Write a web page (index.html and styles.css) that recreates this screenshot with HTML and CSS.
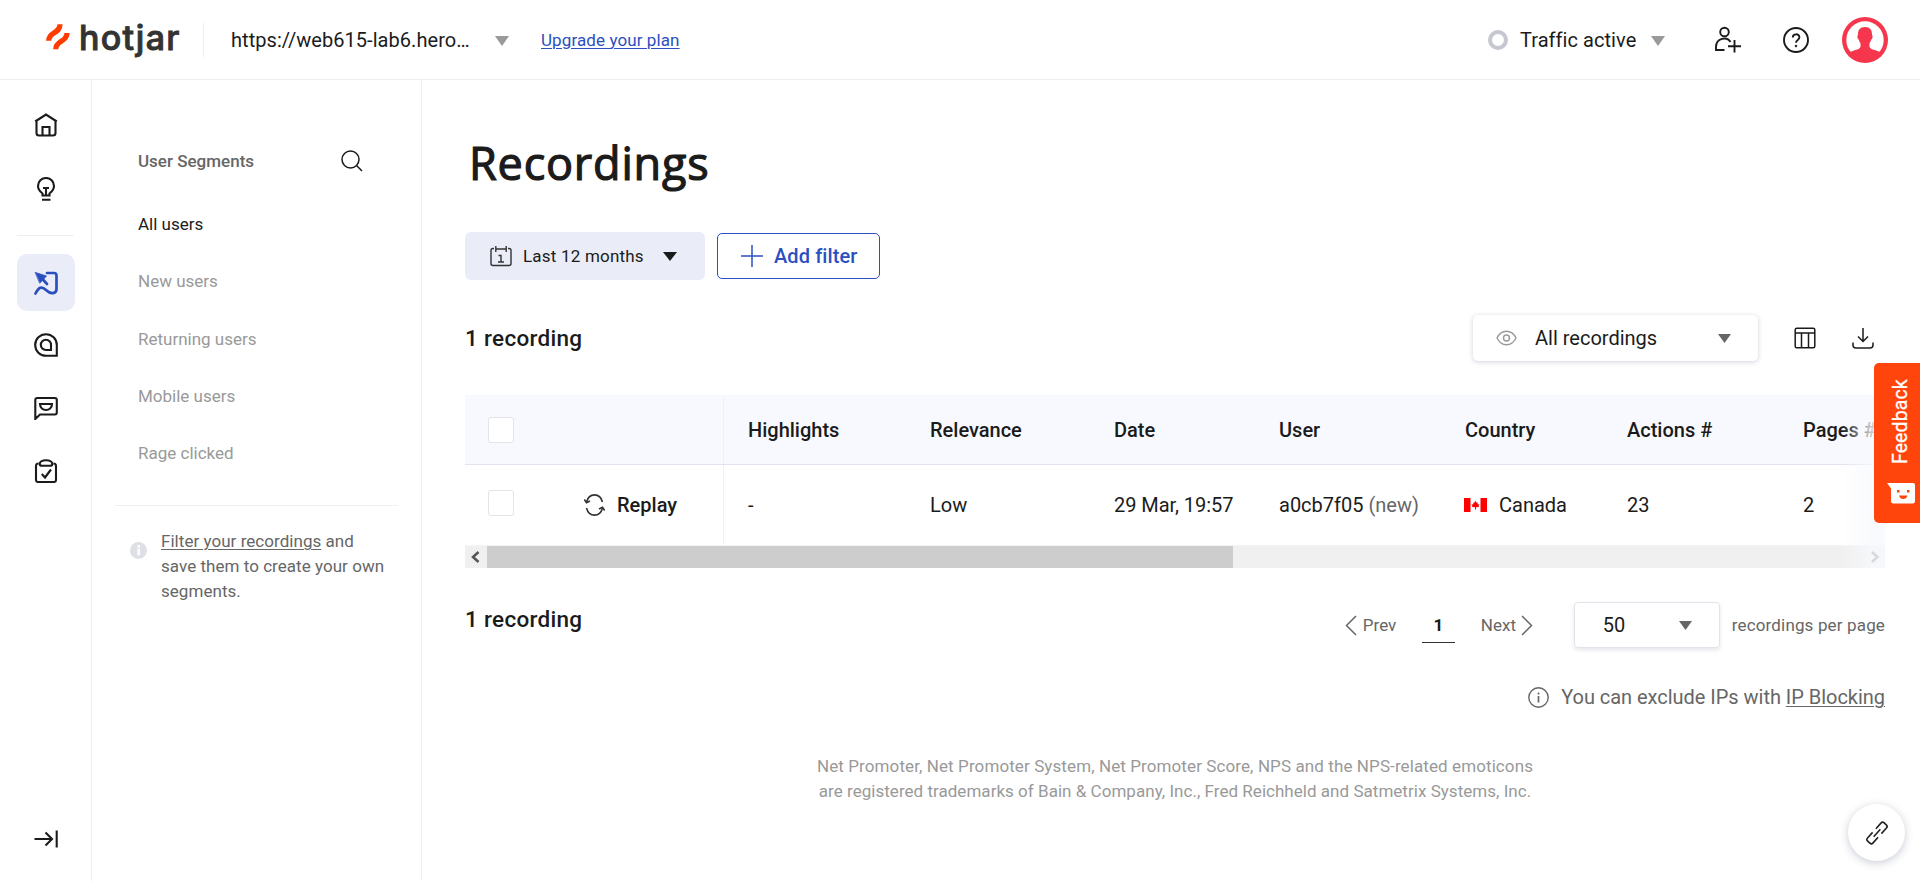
FILE: index.html
```html
<!DOCTYPE html>
<html lang="en">
<head>
<meta charset="utf-8">
<title>Recordings</title>
<link rel="stylesheet" href="styles.css">
</head>
<body>
<header class="topbar">
  <svg class="logo-mark" width="24" height="26" viewBox="0 0 24 26" fill="none" stroke="#ff3c00" stroke-width="5.200"><path d="M2.700 16.800C2.700 7.500 14 10 14 .3"/><path d="M9.700 25.300C9.700 16 21 18.500 21 9"/></svg>
  <span class="logo-text">hotjar</span>
  <span class="top-divider"></span>
  <span class="site">https://web615-lab6.hero…</span>
  <svg class="site-caret" width="14" height="10" viewBox="0 0 14 10"><path d="M0 0h14L7 10z" fill="#999"/></svg>
  <a class="upgrade">Upgrade your plan</a>
  <span class="ring"></span>
  <span class="traffic">Traffic active</span>
  <svg class="traffic-caret" width="14" height="10" viewBox="0 0 14 10"><path d="M0 0h14L7 10z" fill="#999"/></svg>
  <svg class="invite" width="28" height="28" viewBox="0 0 28 28" fill="none" stroke="#1b1b1b" stroke-width="1.900"><circle cx="10.500" cy="6" r="4.300"/><path d="M10.500 24H2v-3c0-9 11-11 14.500-5M20.500 14v12.500M14 20.300h13"/></svg>
  <svg class="help" width="28" height="28" viewBox="0 0 28 28" fill="none" stroke="#1b1b1b" stroke-width="1.900"><circle cx="14" cy="14" r="12"/><path d="M10.800 11.500c0-4.200 6.600-4.200 6.600-.2 0 2.800-3.400 2.400-3.400 5.500"/><circle cx="14" cy="20" r="1" fill="#1b1b1b" stroke-width=".6"/></svg>
  <svg class="avatar" width="46" height="46" viewBox="0 0 46 46"><circle cx="23" cy="23" r="23" fill="#f5364c"/><circle cx="23" cy="23" r="18.700" fill="#fff"/><path d="M23 10c5 0 7.300 3.200 7 8 .9.400.8 3.700-.8 4.700-.6 1.800-1.200 2.700-1.700 3.600v3.600c1.500 3.200 8 3.200 11.500 5.600L31 43H15l-8-7.500c3.500-2.400 10-2.400 11.500-5.600v-3.600c-.5-.9-1.100-1.800-1.700-3.600-1.600-1-1.700-4.300-.8-4.700-.3-4.800 2-8 7-8z" fill="#f5364c"/></svg>
</header>
<div class="shell">
  <nav class="rail">
    <svg class="rail-icon" viewBox="0 0 24 24"><path d="M1.200 8.500 12 1.500l10.800 7M2.500 8v12q0 2.500 2.500 2.500h14q2.500 0 2.500-2.500V8M8.500 22v-8h7v8"/></svg>
    <svg class="rail-icon" viewBox="0 0 24 24"><path d="M8.500 18.500v-2C6.500 15 4 13 4 9a8 8 0 0 1 16 0c0 4-2.500 6-4.500 7.500v2zM9 11h6M12 11v7M8 22.800h8.500"/></svg>
    <span class="rail-divider"></span>
    <span class="rail-active"><svg class="rail-icon" viewBox="0 0 24 24"><path d="M1.500 22.500c3-6 6-8 10.500-3.500s10.500 4 10.500-1V4.500q0-2.500-2.500-2.500h-7" stroke-width="2.700"/><path d="M8 7.500 13 13" stroke-width="2.700"/><path d="M1.500 1.500 12.500 5 6 12z" fill="#2c4fc0" stroke-width=".8"/></svg></span>
    <svg class="rail-icon" viewBox="0 0 24 24"><path d="M22.800 22.800H12A10.800 10.800 0 1 1 22.800 12zM17 17h-5a5.100 5.100 0 1 1 5-5z"/></svg>
    <svg class="rail-icon" viewBox="0 0 24 24"><path d="M1.300 23V4q0-2 2-2h17.500q2 0 2 2v12.500q0 2-2 2H6zM6 8h12c0 8-12 8-12 0z"/></svg>
    <svg class="rail-icon" viewBox="0 0 24 24"><path d="M4.500 4.500Q2 4.500 2 7v14q0 2 2 2h16q2 0 2-2V7q0-2.500-2.500-2.500M8 6.700q-2.300 0-2.300-1.800C5.700 3 8 1.200 12 1.200S18.300 3 18.300 4.900q0 1.800-2.300 1.800zM7.800 15l3.200 3.500L17 10.500"/></svg>
    <svg class="rail-icon rail-expand" viewBox="0 0 24 24"><path d="M.5 12H18M11.500 5.500 18 12l-6.500 6.500M22.700 3.500v17"/></svg>
  </nav>
  <aside class="segments">
    <div class="seg-head"><span>User Segments</span>
      <svg width="22" height="22" viewBox="0 0 22 22" fill="none" stroke="#1b1b1b" stroke-width="1.500"><circle cx="9.500" cy="9.500" r="8.500"/><path d="m15.300 15.300 5.700 5.700"/></svg></div>
    <div class="seg seg-on">All users</div>
    <div class="seg">New users</div>
    <div class="seg">Returning users</div>
    <div class="seg">Mobile users</div>
    <div class="seg">Rage clicked</div>
    <div class="seg-tip">
      <svg width="17" height="17" viewBox="0 0 17 17"><circle cx="8.500" cy="8.500" r="8.500" fill="#dfe0e6"/><path d="M8.700 3.200v2.600M8.700 7v6.300" stroke="#fff" stroke-width="2.600"/></svg>
      <p><a>Filter your recordings</a> and<br>save them to create your own<br>segments.</p>
    </div>
  </aside>
  <main class="main">
    <h1>Recordings</h1>
    <div class="filters">
      <div class="range">
        <svg width="22" height="22" viewBox="0 0 22 22" fill="none" stroke="#333" stroke-width="1.400"><path d="M4 3.500H3Q1 3.500 1 5.500v13q0 2 2 2h16q2 0 2-2v-13q0-2-2-2h-1M6.500 4h9M5.800 1v6M16.200 1v6"/><path d="M8.500 10.500H11v6.500M8 17h6"/></svg>
        <span>Last 12 months</span>
        <svg class="range-caret" width="14" height="9" viewBox="0 0 14 9"><path d="M0 0h14L7 9z" fill="#1b1b1b"/></svg>
      </div>
      <div class="add"><svg width="22" height="22" viewBox="0 0 22 22" stroke="#2c4fc0" stroke-width="1.500"><path d="M0 11h22M11 0v22"/></svg><span>Add filter</span></div>
    </div>
    <div class="toolbar">
      <span class="count">1 recording</span>
      <div class="select-all">
        <svg width="21" height="16" viewBox="0 0 21 16" fill="none" stroke="#999" stroke-width="1.400"><path d="M1 8c4.500-9 14.500-9 19 0-4.500 9-14.500 9-19 0z"/><circle cx="10.500" cy="8" r="3"/></svg>
        <span>All recordings</span>
        <svg width="13" height="9" viewBox="0 0 13 9"><path d="M0 0h13L6.500 9z" fill="#666"/></svg>
      </div>
      <svg class="cols" width="22" height="22" viewBox="0 0 22 22" fill="none" stroke="#1b1b1b" stroke-width="1.500"><rect x="1.200" y="1.200" width="19.600" height="19.600" rx="1.500"/><path d="M1 6h20M7.500 6v15M14.500 6v15"/></svg>
      <svg class="dl" width="22" height="22" viewBox="0 0 22 22" fill="none" stroke="#1b1b1b" stroke-width="1.500"><path d="M11 1v13.500M6 9.500l5 5 5-5M1 15.500v2.500q0 3 3 3h14q3 0 3-3v-2.500"/></svg>
    </div>
    <div class="table">
      <div class="row row-head">
        <span class="pick"><i class="box"></i></span><span class="play"></span>
        <span>Highlights</span><span>Relevance</span><span>Date</span><span>User</span><span>Country</span><span>Actions #</span><span>Pages #</span>
      </div>
      <div class="row row-body">
        <span class="pick"><i class="box"></i></span>
        <span class="play"><svg width="21" height="22" viewBox="0 0 21 22" fill="none" stroke="#333" stroke-width="1.600"><path d="M2.500 8C5-1.500 16-1.500 18.500 8M18.500 14C16 23.500 5 23.500 2.500 14"/><path d="m.3 5.500 2.200 3.300L6 7M20.700 16.500 18.500 13.200 15 15"/></svg>Replay</span>
        <span>-</span><span>Low</span><span class="date">29 Mar, 19:57</span><span class="user">a0cb7f05 <em>(new)</em></span>
        <span class="country"><svg width="23" height="14" viewBox="0 0 23 14"><path d="M0 0h23v14H0z" fill="#fff"/><path d="M0 0h6.500v14H0zM16.500 0H23v14h-6.500zM11.500 2.800l1.200 2 1-.2-.1 1.600 2 .3-1 1.300.4 1.200-3 .3v2.200h-1V9.300l-3-.3.400-1.200-1-1.300 2-.3-.1-1.600 1 .2z" fill="red"/></svg>Canada</span>
        <span>23</span><span>2</span>
      </div>
      <div class="scroll">
        <svg class="scroll-left" width="22" height="22" viewBox="0 0 22 22" fill="none" stroke="#555" stroke-width="2.500"><path d="m13.500 6-5.500 5 5.500 5"/></svg>
        <span class="thumb"></span>
        <svg class="scroll-right" width="22" height="22" viewBox="0 0 22 22" fill="none" stroke="#555" stroke-width="2.500"><path d="m9 6 5.500 5L9 16"/></svg>
      </div>
      <div class="fade"></div>
    </div>
    <div class="pager">
      <span class="count">1 recording</span>
      <span class="prev"><svg width="12" height="21" viewBox="0 0 12 21" fill="none" stroke="#666" stroke-width="1.500"><path d="M11 1 1.500 10.500 11 20"/></svg>Prev</span>
      <span class="page">1</span>
      <span class="next">Next<svg width="12" height="21" viewBox="0 0 12 21" fill="none" stroke="#666" stroke-width="1.500"><path d="m1 1 9.500 9.500L1 20"/></svg></span>
      <span class="size">50<svg width="13" height="9" viewBox="0 0 13 9"><path d="M0 0h13L6.500 9z" fill="#666"/></svg></span>
      <span class="per">recordings per page</span>
    </div>
    <div class="ip"><svg width="21" height="21" viewBox="0 0 21 21" fill="none" stroke="#666" stroke-width="1.400"><circle cx="10.500" cy="10.500" r="9.700"/><path d="M10.500 9v6.500M10.500 5.500v2" stroke-width="1.700"/></svg><span>You can exclude IPs with <a>IP Blocking</a></span></div>
    <p class="legal"><span class="legal-a">Net Promoter, Net Promoter System, Net Promoter Score, NPS and the NPS-related emoticons</span><br><span class="legal-b">are registered trademarks of Bain &amp; Company, Inc., Fred Reichheld and Satmetrix Systems, Inc.</span></p>
  </main>
</div>
<div class="feedback"><span>Feedback</span><svg width="28" height="21" viewBox="0 0 28 21"><path d="M0 0h26q2 0 2 2v16q0 2.500-2.500 2.500h-19Q4 20.500 4 18V5.500z" fill="#fff"/><path d="M10 7h2.500v2.500H10zM20 7h2.500v2.500H20zM12 12.500h8.500c-1 4.700-7.500 4.700-8.500 0z" fill="#ff450b"/></svg></div>
<div class="link"><svg width="22" height="22" viewBox="0 0 22 22" fill="none" stroke="#222" stroke-width="1.600"><g transform="rotate(-48 11 11)"><path d="M8.500 7.300H1q-2.300 0-2.300 2.300v2.800q0 2.300 2.300 2.300h7.500M13.500 7.300H21q2.300 0 2.300 2.300v2.800q0 2.300-2.300 2.300h-7.500M6 11h10"/></g></svg></div>
</body>
</html>
```
FILE: styles.css
```css
* { box-sizing: border-box; }
body { margin: 0; height: 881px; overflow: hidden; background: #fff; color: #1b1b1b; font: 20px/24px Roboto, sans-serif; }
svg { display: block; flex: none; }
span { white-space: nowrap; }
a { text-decoration: underline; text-underline-offset: 2px; text-decoration-thickness: 1px; }

.topbar { height: 80px; border-bottom: 1px solid #efefef; display: flex; align-items: center; }
.logo-mark { margin-left: 46px; margin-top: -6px; }
.logo-text { width: 124px; margin-left: 9px; margin-top: -4px; font: 500 34px/40px Inter, sans-serif; color: #333; letter-spacing: 1.300px; -webkit-text-stroke: 0.900px #333; }
.top-divider { width: 1px; height: 34px; background: #eee; }
.site { width: 238px; margin-left: 27px; letter-spacing: 0.05px; }
.site-caret { margin-left: 26px; margin-top: 3px; }
.upgrade { width: 139px; margin-left: 32px; color: #2c4fc0; font-size: 17px; letter-spacing: 0.1px; }
.ring { width: 20px; height: 20px; margin-left: 808px; border: 4.500px solid #c5c7d1; border-radius: 50%; }
.traffic { width: 116px; margin-left: 12px; letter-spacing: 0.05px; }
.traffic-caret { margin-left: 15px; margin-top: 3px; }
.invite { margin-left: 49px; }
.help { margin-left: 40px; }
.avatar { margin-left: 32px; }

.shell { display: flex; height: 801px; }
.rail { width: 92px; border-right: 1px solid #efefef; display: flex; flex-direction: column; align-items: center; padding-top: 33px; }
.rail-icon { width: 24px; height: 24px; fill: none; stroke: #1b1b1b; stroke-width: 2.100; margin-bottom: 39px; }
.rail-icon:nth-of-type(2) { margin-top: 1px; }
.rail-divider { width: 57px; height: 1px; background: #efefef; margin-bottom: 18px; margin-top: -5px; }
.rail-active { width: 58px; height: 57px; border-radius: 10px; background: #eaecf8; display: flex; align-items: center; justify-content: center; margin-bottom: 22px; }
.rail-active .rail-icon { margin: 0; stroke: #2c4fc0; stroke-linecap: round; }
.rail-expand { margin-top: auto; margin-bottom: 30px; }

.segments { width: 330px; border-right: 1px solid #efefef; padding: 66px 23px 0; color: #666; font-size: 17px; }
.seg-head { display: flex; justify-content: space-between; align-items: center; padding: 0 35px 0 23px; height: 30px; margin-bottom: 20px; font-weight: 500; letter-spacing: 0; }
.seg { height: 57.300px; line-height: 57.300px; padding-left: 23px; color: #999; letter-spacing: 0; }
.seg-on { color: #1b1b1b; }
.seg-tip { display: flex; border-top: 1px solid #efefef; margin-top: 22.500px; padding-top: 23.500px; gap: 14px; padding-left: 15px; }
.seg-tip svg { margin-top: 13px; }
.seg-tip p { margin: 0; line-height: 25px; white-space: nowrap; letter-spacing: 0.04px; }

.main { width: 1498px; padding: 53px 35px 0 43px; }
h1 { margin: 0 0 39px 4px; font: 500 45px/60px "Open Sans", sans-serif; letter-spacing: 0.8px; -webkit-text-stroke: 1.200px #1b1b1b; }
.filters { display: flex; gap: 12px; align-items: center; height: 48px; }
.range { width: 240px; height: 48px; border-radius: 6px; background: #eaecf8; display: flex; align-items: center; padding-left: 25px; font-size: 17px; }
.range span { width: 140px; margin-left: 11px; letter-spacing: 0.2px; }
.add { width: 163px; height: 46px; border: 1px solid #2c4fc0; border-radius: 5px; display: flex; align-items: center; padding-left: 23px; gap: 11px; color: #2c4fc0; font-weight: 500; letter-spacing: 0.1px; }
.toolbar { display: flex; align-items: center; height: 46px; margin-top: 35px; }
.count { font-weight: 500; font-size: 22.500px; width: 1008px; letter-spacing: 0.3px; }
.select-all { width: 285px; height: 46px; border-radius: 5px; box-shadow: 0 1px 5px rgba(40, 50, 90, .22); display: flex; align-items: center; padding-left: 23px; }
.select-all span { width: 183px; margin-left: 18px; }
.cols { margin-left: 36px; }
.dl { margin-left: 36px; }

.table { position: relative; width: 1420px; margin-top: 34px; }
.row { display: grid; grid-template-columns: 71px 212px 182px 184px 165px 186px 162px 176px 82px; align-items: center; overflow: hidden; }
.row > .pick { padding-left: 23px; }
.row-head { height: 70px; background: #f8f9fe; border-bottom: 1px solid #e1e4ec; font-weight: 500; }
.row-body { height: 81px; border-bottom: 1px solid #f3f4f6; }
.box { display: block; width: 26px; height: 26px; border: 1px solid #e3e4ea; border-radius: 3px; background: #fff; }
.row-body .box { margin-top: -4px; }
.row > .play { width: 188px; height: 100%; border-right: 1px solid #f0f1f4; display: flex; align-items: center; gap: 12px; padding-left: 48px; font-weight: 500; }
.date { letter-spacing: -0.050px; }
.user em { color: #666; font-style: normal; }
.country { display: flex; align-items: center; gap: 12px; margin-left: -1px; }
.scroll { display: flex; align-items: center; height: 22px; background: #f0f0f0; }
.thumb { width: 746px; height: 22px; background: #cdcdcd; }
.scroll-right { margin-left: auto; }
.fade { position: absolute; right: 0; top: 0; width: 43px; height: 173px; background: linear-gradient(90deg, rgba(248, 249, 254, 0), rgba(248, 249, 254, .8) 70%, rgba(248, 249, 254, .8)); }

.pager { display: flex; align-items: center; height: 46px; margin-top: 34px; color: #666; font-size: 17px; }
.pager .count { width: 880px; color: #1b1b1b; margin-top: -12px; }
.prev, .next { display: flex; align-items: center; gap: 6px; }
.prev { width: 77px; }
.page { width: 33px; height: 36px; border-bottom: 1px solid #333; color: #1b1b1b; font-weight: 700; line-height: 25px; text-align: center; padding-top: 6px; }
.next { width: 52px; margin-left: 26px; gap: 5px; }
.size { width: 146px; height: 46px; margin-left: 41px; border: 1px solid #e1e3ea; border-radius: 4px; box-shadow: 0 2px 4px rgba(40, 50, 90, .12); display: flex; align-items: center; justify-content: space-between; padding: 0 27px 0 28px; color: #1b1b1b; font-size: 20px; }
.per { margin-left: 12px; letter-spacing: 0.15px; }
.ip { display: flex; justify-content: space-between; align-items: center; width: 357px; margin: 37px 0 0 1063px; color: #666; letter-spacing: -0.030px; }
.legal { margin: 45px 0 0; text-align: center; color: #999; font-size: 17px; line-height: 25px; }
.legal-a { letter-spacing: 0.1px; }
.legal-b { letter-spacing: 0.03px; }

.feedback { position: absolute; left: 1874px; top: 363px; width: 46px; height: 160px; border-radius: 5px 0 0 5px; background: #ff450b; color: #fff; display: flex; flex-direction: column; align-items: center; padding: 14px 0 0 7px; }
.feedback span { writing-mode: vertical-rl; transform: rotate(180deg); height: 87px; margin-bottom: 19px; font-size: 19.500px; line-height: 24px; letter-spacing: 0.1px; -webkit-text-stroke: 0.3px #fff; }
.feedback svg { align-self: flex-start; margin-left: 6px; }
.link { position: absolute; left: 1848px; top: 804px; width: 57px; height: 57px; border-radius: 50%; background: #fff; box-shadow: 0 2px 9px rgba(40, 50, 90, .25); display: flex; align-items: center; justify-content: center; }
.link svg { overflow: visible; }
```
